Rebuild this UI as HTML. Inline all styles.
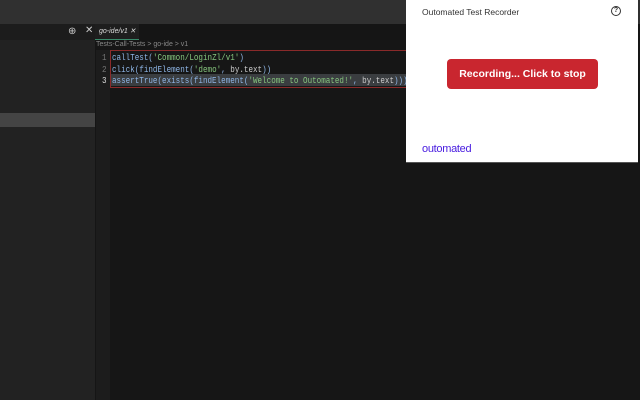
<!DOCTYPE html>
<html><head><style>
*{margin:0;padding:0;box-sizing:border-box}
body{width:640px;height:400px;overflow:hidden;background:#161616;position:relative;font-family:"Liberation Sans",sans-serif}
.abs{position:absolute}
.code{font-family:"Liberation Mono",monospace;font-size:9.6px;line-height:11.7px;white-space:pre;transform-origin:0 0;transform:scaleX(0.79)}
</style></head><body>
<div class="abs" style="left:0;top:0;width:640px;height:24px;background:#303030"></div>
<div class="abs" style="left:0;top:24px;width:95px;height:16px;background:#1c1c1c"></div>
<div class="abs" style="left:95px;top:24px;width:545px;height:16px;background:#151515"></div>
<div class="abs" style="left:68px;top:26px;color:#ccc;font-size:10px">⊕</div>
<div class="abs" style="left:85px;top:25px;color:#ccc;font-size:10px">✕</div>
<div class="abs" style="left:95px;top:24px;width:44px;height:16px;background:#1e1e1e;border-bottom:1px solid #3a8a6a"></div>
<div class="abs" style="left:99px;top:27px;color:#ddd;font-size:7px;font-style:italic">go-ide/v1 ✕</div>
<div class="abs" style="left:0;top:40px;width:95px;height:360px;background:#222"></div>
<div class="abs" style="left:0;top:113px;width:95px;height:14px;background:#444"></div>
<div class="abs" style="left:95px;top:40px;width:1px;height:360px;background:#151515"></div>
<div class="abs" style="left:96px;top:50px;width:14px;height:350px;background:#1c1c1c"></div>
<div class="abs" style="left:96px;top:41px;color:#888;font-size:7px">Tests-Call-Tests &gt; go-ide &gt; v1</div>
<div class="abs" style="left:110px;top:50px;width:296px;height:38px;border:1px solid #8a2a2a;border-right:none"></div>
<div class="abs" style="left:111px;top:74px;width:295px;height:12px;background:#3a3d40"></div>
<div class="abs code" style="left:102px;top:52px;color:#777">1
2
<span style="color:#ddd">3</span></div>
<div class="abs code" style="left:112px;top:52px;color:#8fb6e6">callTest(<span style="color:#86c67e">'Common/LoginZl/v1'</span>)
click(findElement(<span style="color:#86c67e">'demo'</span>, <span style="color:#ccc">by.text</span>))
assertTrue(exists(findElement(<span style="color:#86c67e">'Welcome to Outomated!'</span>, <span style="color:#ccc">by.text</span>)))</div>
<div class="abs" style="left:406px;top:0;width:232px;height:163px;background:#fff;border-bottom:1px solid #555"></div>
<div class="abs" style="left:422px;top:7px;font-size:8.5px;color:#333">Outomated Test Recorder</div>
<div class="abs" style="left:611px;top:6px;width:10px;height:10px;border:1px solid #333;border-radius:50%;font-size:7px;line-height:8px;text-align:center;color:#333;font-weight:bold">?</div>
<div class="abs" style="left:447px;top:59px;width:151px;height:30px;background:#c9262f;border-radius:4px;color:#fff;font-weight:bold;font-size:10.5px;line-height:30px;text-align:center">Recording... Click to stop</div>
<div class="abs" style="left:422px;top:143px;font-size:11px;color:#4a1ee0;letter-spacing:-0.3px">outomated</div>
</body></html>
